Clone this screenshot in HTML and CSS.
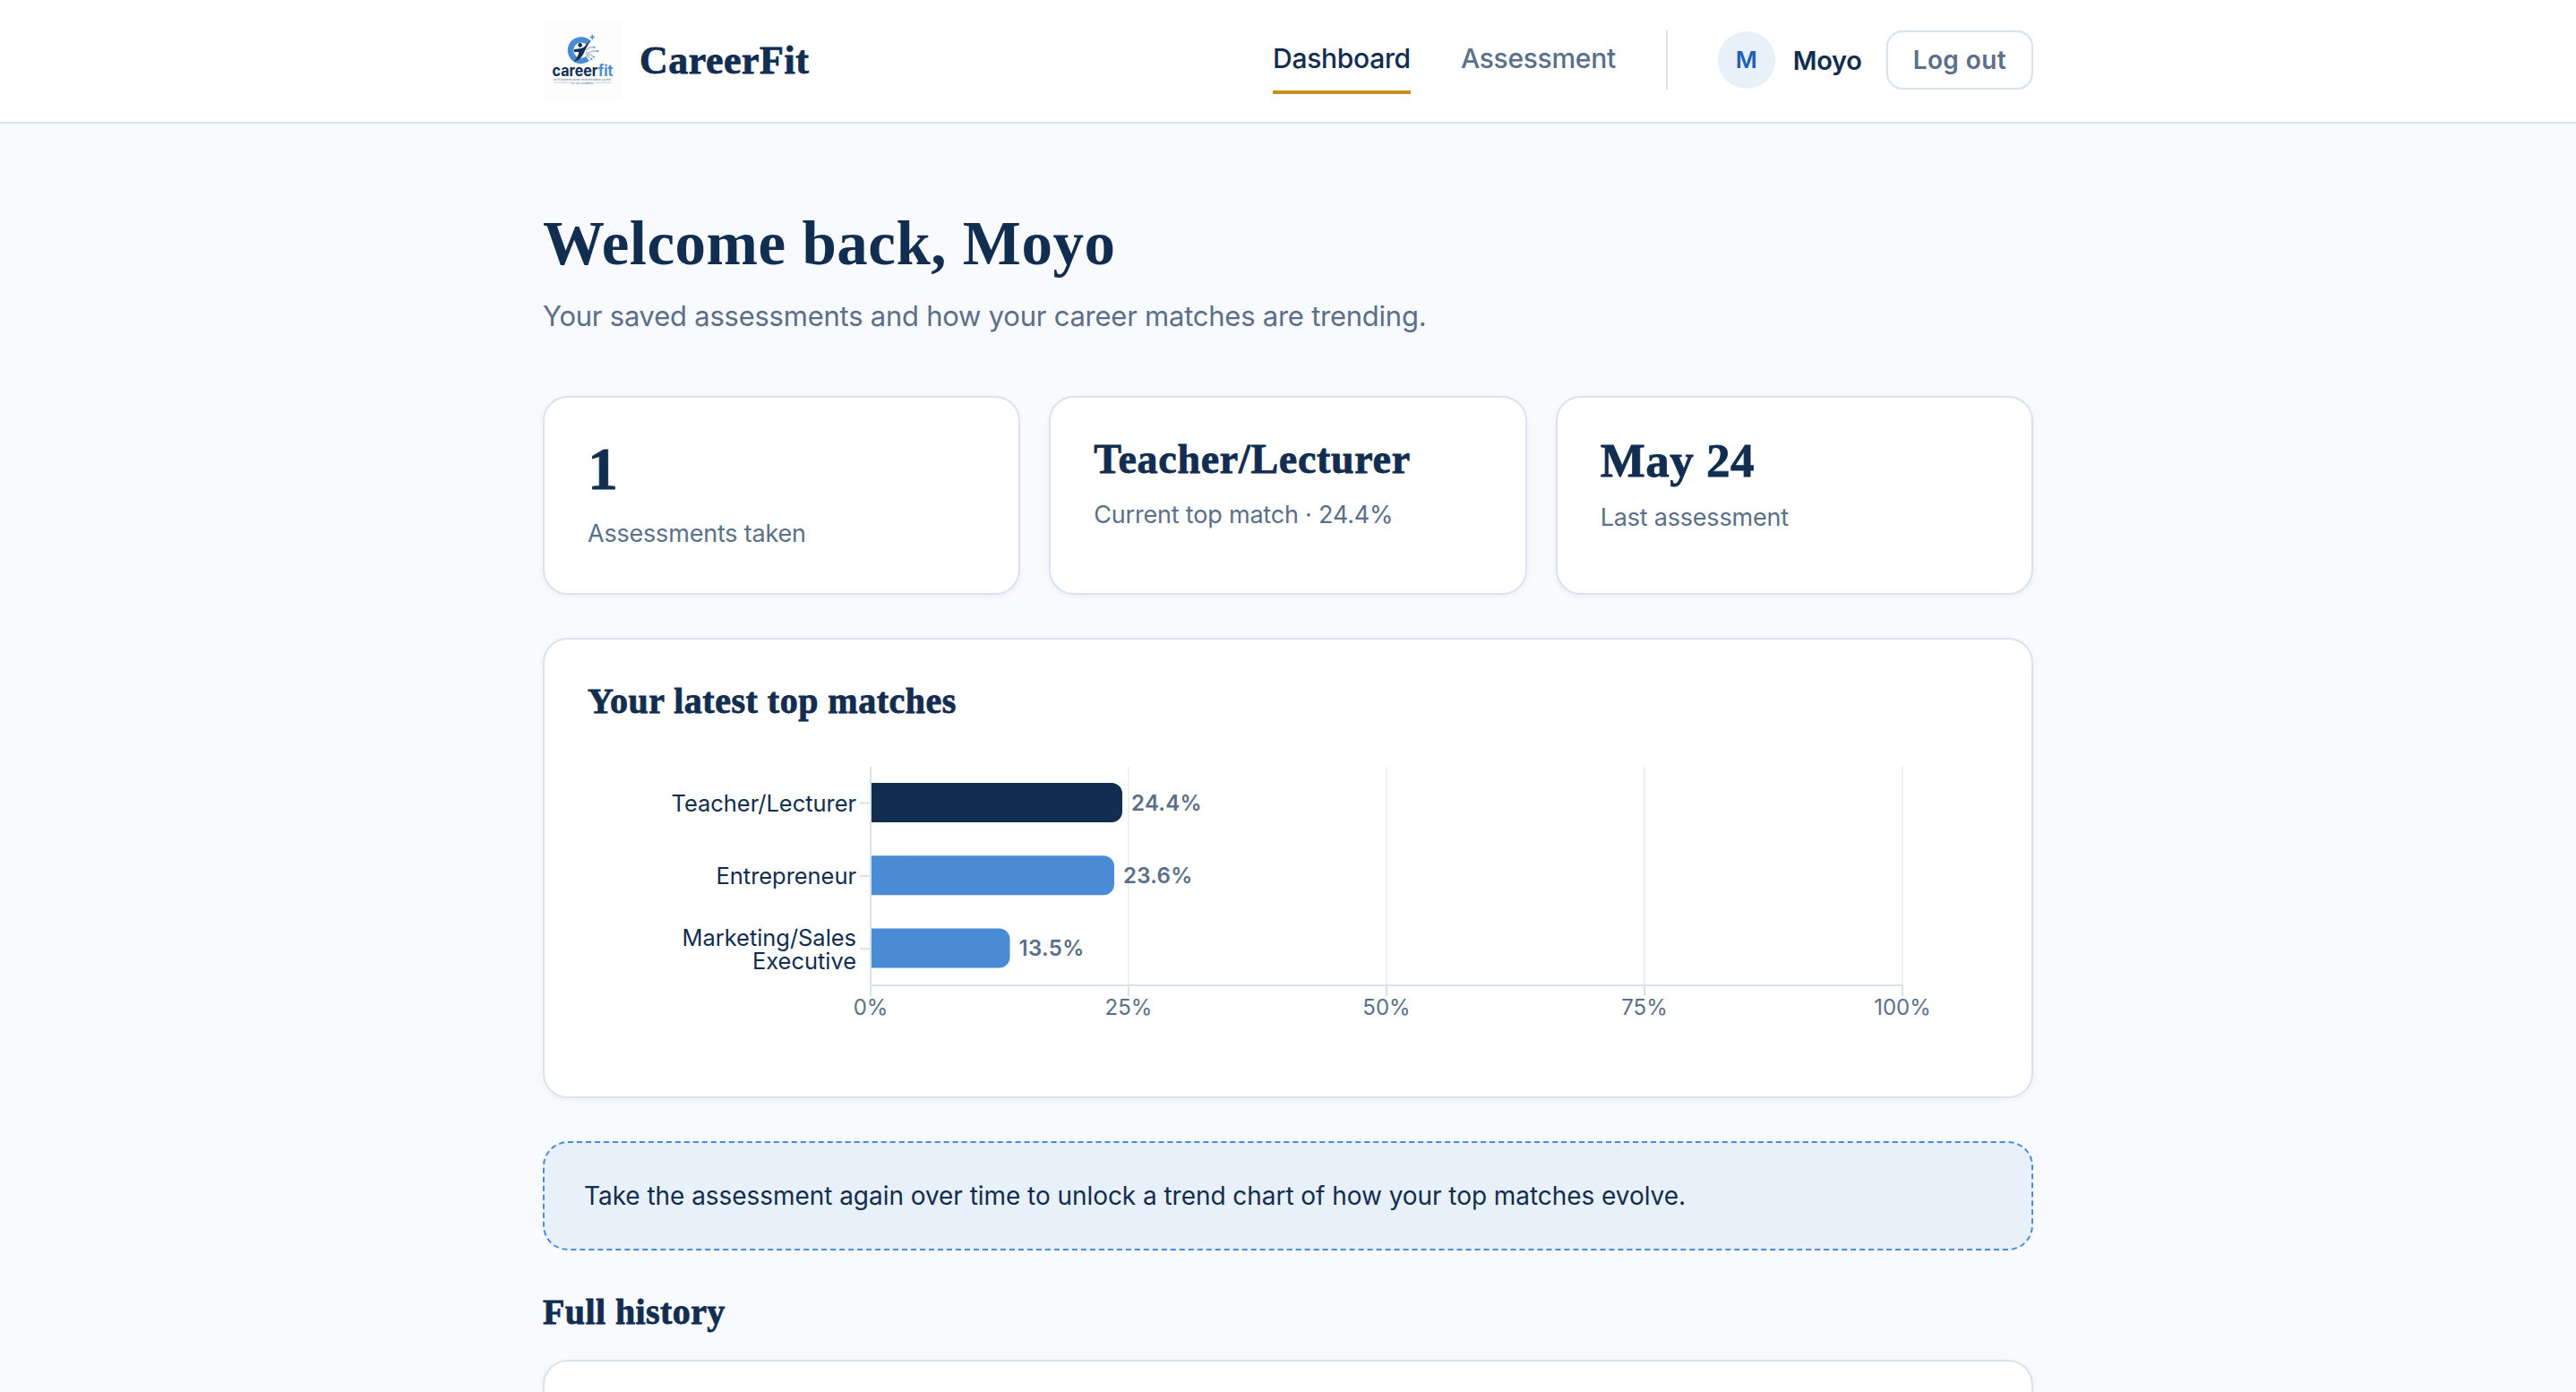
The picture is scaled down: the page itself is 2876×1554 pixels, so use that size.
FILE: index.html
```
<!DOCTYPE html>
<html lang="en">
<head>
<meta charset="UTF-8">
<title>CareerFit - Dashboard</title>
<link rel="stylesheet" href="styles.css">
</head>
<body>
<header class="site-header">
	<div class="container header-inner">
		<a class="brand">
			<svg class="brand-logo" viewBox="0 0 88 88">
				<rect width="88" height="88" fill="#fdfdfe"/>
				<path d="M51.5 24.2A11.8 11.8 0 1 0 50 41.5" fill="none" stroke="#4a8bd6" stroke-width="6.4"/>
				<path d="M55.3 15v5M52.8 17.5h5" stroke="#4a8bd6" stroke-width="1.6"/>
				<circle cx="41.7" cy="26.4" r="2.3" fill="#112d50"/>
				<path d="M53.6 20.4C50 27 47.500 31 46 35C43 41 39 44 34.800 44.600C38 41.500 40 38 40.200 33.800L35 34.200L34.600 31.600C38 29.600 44 31.500 47 27.500Z" fill="#112d50"/>
				<g fill="none" stroke="#7f9cc4" stroke-width="1">
					<path d="M48 32l4-3h5M48 35h4l3-2h6M48 37h5l3 2M48 39h3l3 3"/>
				</g>
				<g fill="#4a8bd6">
					<circle cx="57.500" cy="28.800" r="1"/>
					<circle cx="61.400" cy="33" r="1"/>
					<circle cx="57" cy="39.500" r="1"/>
					<circle cx="54.500" cy="42" r="1"/>
				</g>
				<text class="logo-name" x="10.5" y="60.600" textLength="68" lengthAdjust="spacingAndGlyphs">career<tspan fill="#4a8bd6">fit</tspan></text>
				<text class="logo-tag" x="12" y="65.800" textLength="64" lengthAdjust="spacingAndGlyphs">an AI-powered career recommendation system</text>
				<text class="logo-tag" x="31" y="69.800" textLength="26" lengthAdjust="spacingAndGlyphs">for uni students</text>
				<path d="M12.500 68.200h17.500M59 68.200h17.500" stroke="#b4c3d8" stroke-width=".8"/>
			</svg>
			<span class="brand-name">CareerFit</span>
		</a>
		<nav class="nav">
			<a class="nav-link active">Dashboard</a>
			<a class="nav-link">Assessment</a>
			<div class="user">
				<span class="avatar">M</span>
				<span class="user-name">Moyo</span>
				<button class="logout">Log out</button>
			</div>
		</nav>
	</div>
</header>

<main class="container main">
	<h1>Welcome back, Moyo</h1>
	<p class="subtitle">Your saved assessments and how your career matches are trending.</p>

	<div class="stats">
		<div class="card">
			<div class="stat-value">1</div>
			<div class="stat-label">Assessments taken</div>
		</div>
		<div class="card">
			<div class="stat-value stat-text">Teacher/Lecturer</div>
			<div class="stat-label">Current top match · 24.4%</div>
		</div>
		<div class="card">
			<div class="stat-value stat-date">May 24</div>
			<div class="stat-label">Last assessment</div>
		</div>
	</div>

	<section class="card chart-card">
		<h2 class="chart-title">Your latest top matches</h2>
		<svg class="chart" viewBox="0 0 1564 372">
			<path class="grid" d="M604 52V296M892 52V296M1180 52V296M1468 52V296"/>
			<path class="axis" d="M316 52V308M316 296H1469M604 296V308M892 296V308M1180 296V308M1468 296V308"/>
			<path class="axis" d="M304 92.500H316M304 174H316M304 255.300H316"/>

			<path fill="#112d50" d="M317 70H585a12 12 0 0 1 12 12V102a12 12 0 0 1-12 12H317Z"/>
			<path fill="#4a8bd6" d="M317 151.200H576a12 12 0 0 1 12 12V183.200a12 12 0 0 1-12 12H317Z"/>
			<path fill="#4a8bd6" d="M317 232.600H459.500a12 12 0 0 1 12 12V264.600a12 12 0 0 1-12 12H317Z"/>

			<g class="y-label">
				<text x="300" y="102">Teacher/Lecturer</text>
				<text x="300" y="183">Entrepreneur</text>
				<text x="300" y="252">Marketing/Sales</text>
				<text x="300" y="278">Executive</text>
			</g>
			<g class="value">
				<text x="607" y="101">24.4%</text>
				<text x="598" y="182">23.6%</text>
				<text x="481.500" y="263">13.5%</text>
			</g>
			<g class="x-label">
				<text x="316" y="328.500">0%</text>
				<text x="604" y="328.500">25%</text>
				<text x="892" y="328.500">50%</text>
				<text x="1180" y="328.500">75%</text>
				<text x="1468" y="328.500">100%</text>
			</g>
		</svg>
	</section>

	<div class="notice">Take the assessment again over time to unlock a trend chart of how your top matches evolve.</div>

	<h2 class="section-title">Full history</h2>
	<div class="card history"></div>
</main>
</body>
</html>
```

FILE: styles.css
```
*
{
	box-sizing:border-box;
}
body
{
	margin:0;
	background:#f8fafe;
	color:#112d50;
	font-family:Inter, "Liberation Sans", sans-serif;
}
h1, h2, p
{
	margin:0;
}
h1, h2, .brand-name, .stat-value
{
	font-family:"Liberation Serif", serif;
	font-weight:700;
}
h2, .brand-name, .stat-value
{
	-webkit-text-stroke:0.8px #112d50;
}
.container
{
	width:1664px;
	margin:0 auto;
}

/* header */
.site-header
{
	height:138px;
	background:#ffffff;
	border-bottom:2px solid #d9e3ee;
}
.header-inner
{
	height:100%;
	display:flex;
	align-items:center;
	justify-content:space-between;
}
.brand
{
	display:flex;
	align-items:center;
	gap:20px;
}
.brand-logo
{
	width:88px;
	height:88px;
}
.logo-name
{
	font-family:Inter, sans-serif;
	font-size:17px;
	font-weight:700;
	fill:#112d50;
}
.logo-tag
{
	font-size:3.4px;
	fill:#5b6f8a;
}
.brand-name
{
	font-size:44px;
	line-height:48px;
	padding-bottom:1px;
	letter-spacing:0.5px;
}
.nav
{
	display:flex;
	align-items:center;
	gap:56px;
}
.nav-link
{
	padding:12px 0 13px;
	border-bottom:4px solid transparent;
	font-size:30px;
	font-weight:500;
	line-height:45px;
	letter-spacing:-0.3px;
	color:#5b6f8a;
}
.nav-link.active
{
	color:#112d50;
	border-bottom-color:#c5901f;
}
.user
{
	height:66px;
	margin-bottom:2px;
	display:flex;
	align-items:center;
	padding-left:56px;
	border-left:2px solid #d9e3ee;
}
.avatar
{
	width:64px;
	height:64px;
	border-radius:50%;
	background:#e8f0fa;
	color:#1d5fb4;
	font-size:26px;
	font-weight:600;
	line-height:64px;
	text-align:center;
}
.user-name
{
	margin:0 27px 0 20px;
	font-size:29px;
	font-weight:600;
	letter-spacing:-0.3px;
}
.logout
{
	height:66px;
	padding:0 28px;
	background:#ffffff;
	border:2px solid #d9e3ee;
	border-radius:18px;
	color:#5b6f8a;
	font-family:inherit;
	font-size:28px;
	font-weight:600;
	letter-spacing:0.4px;
}

/* page */
.main
{
	height:1416px;
	padding-top:96px;
	overflow:clip;
	overflow-clip-margin:20px;
}
h1
{
	font-size:69px;
	line-height:76px;
	letter-spacing:0.5px;
}
.subtitle
{
	margin:19px 0 65px;
	font-size:31px;
	line-height:48px;
	letter-spacing:-0.24px;
	color:#5b6f8a;
}
.card
{
	padding:48px;
	background:#ffffff;
	border:2px solid #d9e3ee;
	border-radius:28px;
	box-shadow:0 2px 6px rgba(17,45,80,0.06);
}
.stats
{
	display:grid;
	grid-template-columns:repeat(3, 1fr);
	gap:32px;
}
.stat-value
{
	font-size:68px;
	line-height:62px;
}
.stat-text
{
	font-size:46px;
	line-height:41px;
	letter-spacing:0.7px;
}
.stat-date
{
	font-size:53px;
	line-height:44px;
	letter-spacing:0.5px;
}
.stat-label
{
	margin-top:24px;
	font-size:27px;
	line-height:36px;
	letter-spacing:-0.2px;
	color:#5b6f8a;
}

/* chart */
.chart-card
{
	margin-top:48px;
}
.chart-title
{
	font-size:40px;
	line-height:42px;
	letter-spacing:0.5px;
}
.chart
{
	display:block;
	width:1564px;
	height:372px;
}
.grid
{
	fill:none;
	stroke:#eef1f6;
	stroke-width:2;
}
.axis
{
	fill:none;
	stroke:#d9e3ee;
	stroke-width:2;
}
.y-label
{
	font-size:25.5px;
	fill:#112d50;
	letter-spacing:-0.05px;
	text-anchor:end;
}
.x-label
{
	font-size:24px;
	fill:#5b6f8a;
	text-anchor:middle;
}
.value
{
	font-size:24px;
	font-weight:600;
	fill:#5b6f8a;
	letter-spacing:0.3px;
}

.notice
{
	margin-top:48px;
	padding:36px 44px;
	background:#e8f0fa;
	border:2px dashed #4a8bd6;
	border-radius:28px;
	font-size:28px;
	line-height:46px;
	letter-spacing:-0.05px;
}
.section-title
{
	margin:47px 0 31px;
	font-size:40px;
	line-height:44px;
	letter-spacing:0.4px;
}
.history
{
	height:36px;
	padding:0;
	border-bottom:0;
	border-radius:28px 28px 0 0;
}
```
